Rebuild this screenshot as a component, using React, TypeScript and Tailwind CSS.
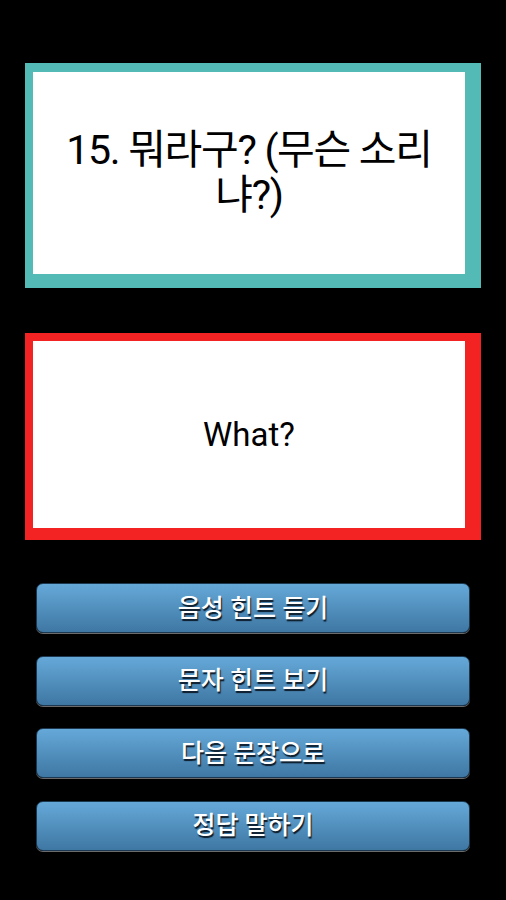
import React from "react";

const font = { fontFamily: 'Roboto, "Noto Sans CJK KR", sans-serif' };

function HintButton({ label }: { label: string }) {
  return (
    <button className="w-full h-[50px] rounded-[7px] border border-[#1b3850] bg-gradient-to-b from-[#65a9d9] to-[#3f77a3] text-white text-[25px] font-medium leading-none shadow-[0_1px_0_#6b6b6b] [text-shadow:1px_2px_1px_#0b1a28]">
      {label}
    </button>
  );
}

export default function App() {
  return (
    <div className="w-[506px] h-[900px] bg-black flex flex-col" style={font}>
      <div className="mt-[63px] ml-[25px] w-[456px] h-[225px] bg-[#53bab5] pl-[8px] pt-[9px] pr-[16px] pb-[14px]">
        <div className="w-full h-full bg-white flex items-center justify-center text-center text-black text-[41px] leading-[45px] tracking-[-1.3px]">
          <span>
            15. 뭐라구? (무슨 소리
            <br />
            냐?)
          </span>
        </div>
      </div>
      <div className="mt-[45px] ml-[25px] w-[456px] h-[207px] bg-[#f42323] pl-[8px] pt-[8px] pr-[16px] pb-[12px]">
        <div className="w-full h-full bg-white flex items-center justify-center text-black text-[33px]">
          What?
        </div>
      </div>
      <div className="mt-[43px] ml-[36px] w-[434px] flex flex-col gap-[22.5px]">
        <HintButton label="음성 힌트 듣기" />
        <HintButton label="문자 힌트 보기" />
        <HintButton label="다음 문장으로" />
        <HintButton label="정답 말하기" />
      </div>
    </div>
  );
}
